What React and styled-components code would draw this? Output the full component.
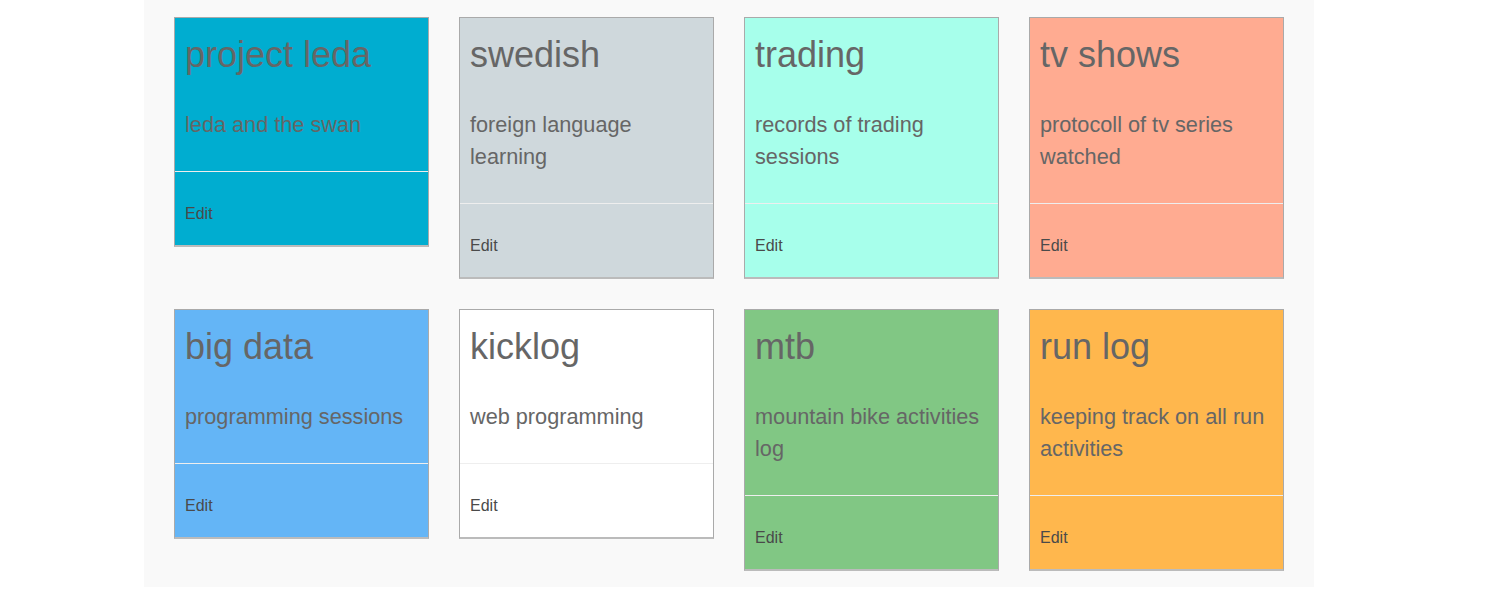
import React from 'react';
import styled, { createGlobalStyle } from 'styled-components';

const PROJECTS = [
  { title: 'project leda', text: 'leda and the swan', color: '#00add0' },
  { title: 'swedish', text: 'foreign language learning', color: '#cfd8dc' },
  { title: 'trading', text: 'records of trading sessions', color: '#a7ffeb' },
  { title: 'tv shows', text: 'protocoll of tv series watched', color: '#ffab91' },
  { title: 'big data', text: 'programming sessions', color: '#64b5f6' },
  { title: 'kicklog', text: 'web programming', color: '#ffffff' },
  { title: 'mtb', text: 'mountain bike activities log', color: '#81c784' },
  { title: 'run log', text: 'keeping track on all run activities', color: '#ffb74d' },
];

const GlobalStyle = createGlobalStyle`
  body {
    margin: 0;
    background: #ffffff;
    font-family: "Liberation Sans", Arial, sans-serif;
  }
`;

const Card = ({ title, text, color }) => {
  return (
    <CardWrapper $color={color}>
      <CardBody>
        <Title>{title}</Title>
        <Description>{text}</Description>
      </CardBody>
      <CardFooter>
        <EditLink href="#">Edit</EditLink>
      </CardFooter>
    </CardWrapper>
  );
};

const App = () => {
  return (
    <>
      <GlobalStyle />
      <Container>
        <Grid>
          {PROJECTS.map((p) => (
            <Card key={p.title} {...p} />
          ))}
        </Grid>
      </Container>
    </>
  );
};

const Container = styled.div`
  width: 1170px;
  margin-left: 144px;
  padding: 17px 30px 16px;
  box-sizing: border-box;
  background: #f9f9f9;
`;

const Grid = styled.div`
  display: grid;
  grid-template-columns: repeat(4, 255px);
  column-gap: 30px;
  row-gap: 30px;
  align-items: start;
`;

const CardWrapper = styled.div`
  background: ${(p) => p.$color};
  border: 1px solid #aaaaaa;
  border-bottom: 2px solid #bbbbbb;
  box-sizing: border-box;
`;

const CardBody = styled.div`
  padding: 17px 10px 30px;
`;

const Title = styled.h2`
  margin: 0;
  font-size: 36px;
  line-height: 40px;
  font-weight: normal;
  color: #666666;
`;

const Description = styled.p`
  margin: 34px 0 0;
  font-size: 21.7px;
  line-height: 32px;
  color: #666666;
`;

const CardFooter = styled.div`
  border-top: 1px solid #eeeeee;
  padding: 31px 10px 20px;
  line-height: 22px;
`;

const EditLink = styled.a`
  font-size: 16px;
  color: #4a4a4a;
  text-decoration: none;
`;

export default App;
